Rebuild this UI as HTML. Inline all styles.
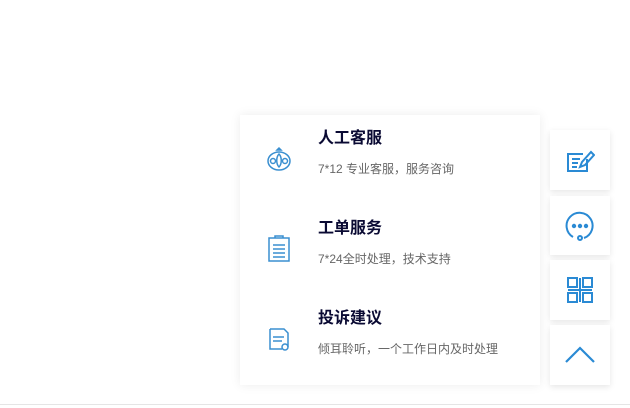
<!DOCTYPE html>
<html><head><meta charset="utf-8"><style>
body{margin:0;width:630px;height:408px;background:#fff;position:relative;overflow:hidden;font-family:"Liberation Sans","Noto Sans CJK SC",sans-serif}
.panel{position:absolute;left:240px;top:115px;width:300px;height:270px;background:#fff;box-shadow:0 0 10px rgba(0,0,0,.08)}
.t{position:absolute;left:78px;font-size:16px;font-weight:bold;color:#0a0a33;line-height:20px}
.s{position:absolute;left:78px;font-size:12px;color:#666;line-height:16px}
.ic{position:absolute;left:26px}
.btn{position:absolute;left:550px;width:60px;background:#fff;box-shadow:0 2px 6px rgba(0,0,0,.1)}
.btn svg{position:absolute;left:15px;top:15px}
.line{position:absolute;left:0;top:404px;width:630px;height:1px;background:#e5e5e5}
</style></head><body>
<div class="panel">
<svg class="ic" style="top:30px" width="26" height="28" viewBox="0 0 26 28" fill="none" stroke="#3a8fd0" stroke-width="1.5"><path d="M13 3 l-2 2 l2 0 l2 0 z"/><ellipse cx="13" cy="16" rx="11" ry="9"/><circle cx="7" cy="16" r="2.5"/><circle cx="19" cy="16" r="2.5"/><path d="M13 9 c-3 3 -3 10 0 13 c3 -3 3 -10 0 -13z"/></svg>
<div class="t" style="top:14px">人工客服</div>
<div class="s" style="top:46px">7*12 专业客服，服务咨询</div>
<svg class="ic" style="top:120px" width="26" height="28" viewBox="0 0 26 28" fill="none" stroke="#3a8fd0" stroke-width="1.5"><rect x="3" y="3" width="20" height="23"/><path d="M9 3v-2h8v2M7 10h12M7 14h12M7 18h12M7 22h12"/></svg>
<div class="t" style="top:104px">工单服务</div>
<div class="s" style="top:136px">7*24全时处理，技术支持</div>
<svg class="ic" style="top:210px" width="26" height="28" viewBox="0 0 26 28" fill="none" stroke="#3a8fd0" stroke-width="1.5"><path d="M4 4h14l4 4v14M4 4v20h12"/><path d="M7 12h11M7 16h9"/><circle cx="19" cy="22" r="3"/></svg>
<div class="t" style="top:194px">投诉建议</div>
<div class="s" style="top:226px">倾耳聆听，一个工作日内及时处理</div>
</div>
<div class="btn" style="top:130px;height:60px"><svg width="30" height="30" viewBox="0 0 30 30" fill="none" stroke="#2a8ad4" stroke-width="2"><path d="M22 14v12H3V9h15"/><path d="M7 14h8M7 18h6M7 22h5"/><path d="M15 22l2-5 9-10 3 3-9 10z"/></svg></div>
<div class="btn" style="top:196px;height:59px"><svg width="30" height="30" viewBox="0 0 30 30" fill="none" stroke="#2a8ad4" stroke-width="2"><path d="M8 26 A13 13 0 1 1 19 27"/><circle cx="15" cy="27" r="2"/><circle cx="9" cy="15" r="1.2" fill="#2a8ad4"/><circle cx="15" cy="15" r="1.2" fill="#2a8ad4"/><circle cx="21" cy="15" r="1.2" fill="#2a8ad4"/></svg></div>
<div class="btn" style="top:260px;height:60px"><svg width="30" height="30" viewBox="0 0 30 30" fill="none" stroke="#2a8ad4" stroke-width="2"><rect x="3" y="3" width="9" height="9"/><rect x="18" y="3" width="9" height="9"/><rect x="3" y="18" width="9" height="9"/><rect x="18" y="18" width="9" height="9"/><path d="M15 3v24M3 15h24"/></svg></div>
<div class="btn" style="top:325px;height:60px"><svg width="30" height="30" viewBox="0 0 30 30" fill="none" stroke="#2a8ad4" stroke-width="2.2"><path d="M1 22 L15 8 L29 22"/></svg></div>
<div class="line"></div>
</body></html>
